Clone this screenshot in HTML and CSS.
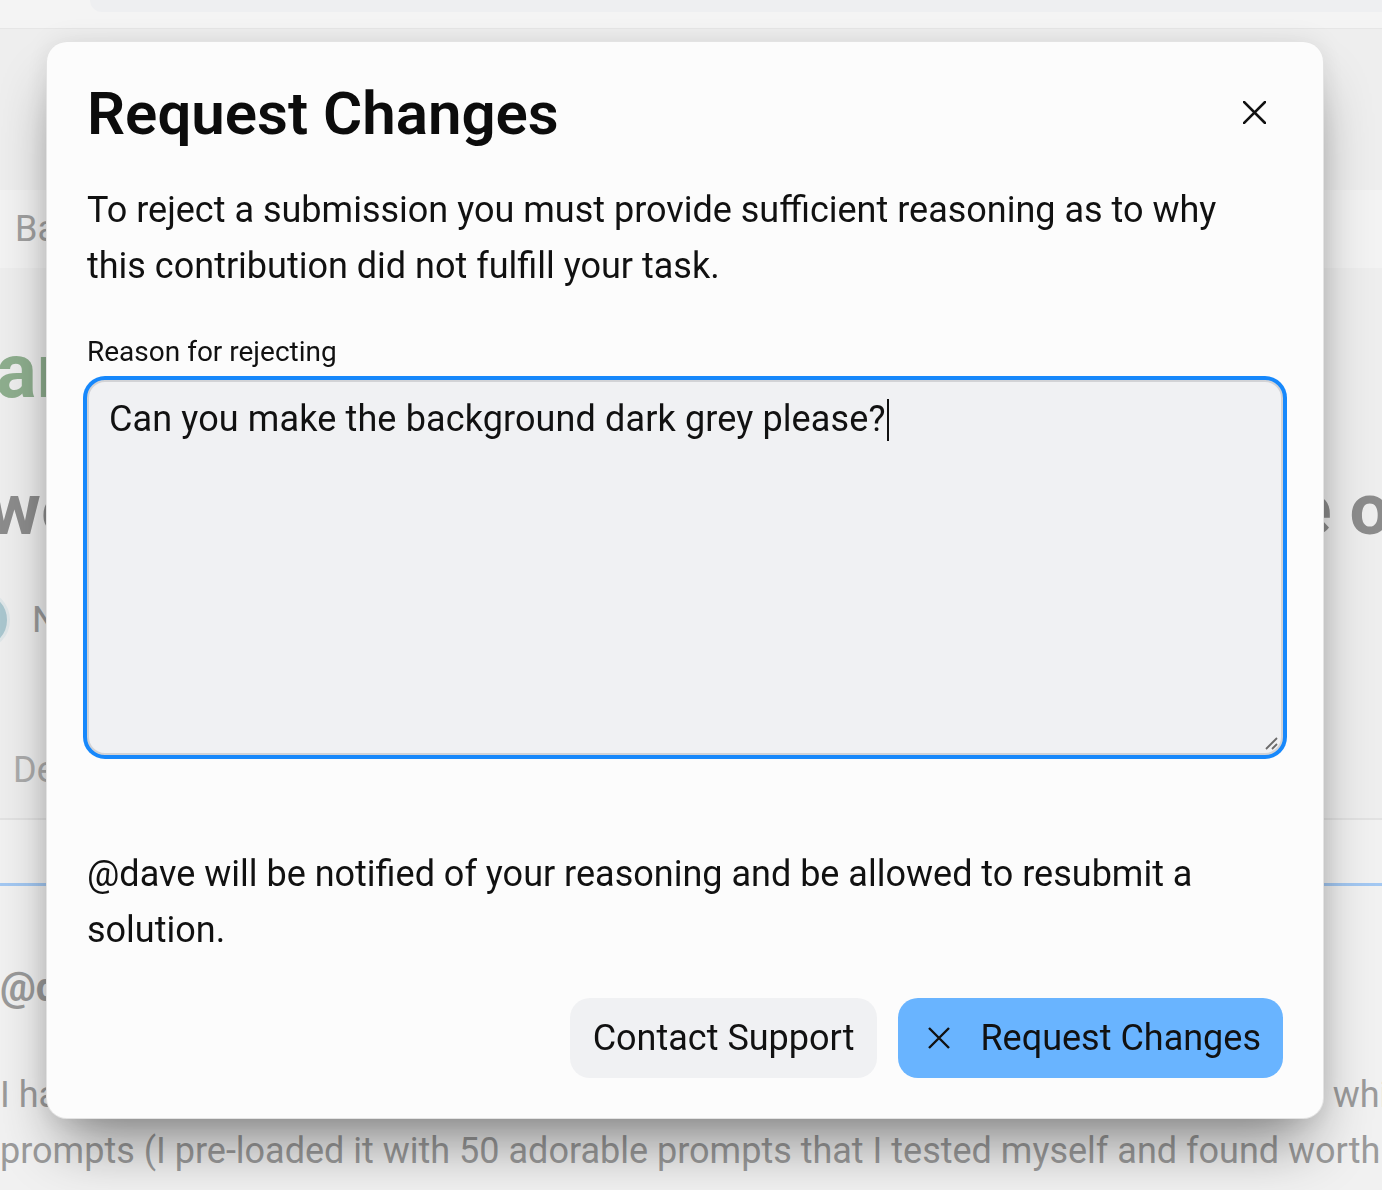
FILE: index.html
```html
<!DOCTYPE html>
<html lang="en">
<head>
<meta charset="utf-8">
<title>Request Changes</title>
<link rel="stylesheet" href="styles.css">
</head>
<body>
<div class="page">
  <header class="topbar"><div class="topbar-search"></div></header>
  <main class="main">
    <div class="crumbs">Back</div>
    <h1 class="hero">art</h1>
    <div class="subhead"><span>we</span><span class="subhead-right">one of</span></div>
    <div class="author"><span class="avatar"></span><span class="author-name">Nina</span></div>
    <div class="meta">Details</div>
  </main>
  <section class="lower">
    <div class="tabs"></div>
    <div class="handle">@dave</div>
    <div class="post-line"><span>I have</span><span class="post-right">which</span></div>
    <div class="post-line">prompts (I pre-loaded it with 50 adorable prompts that I tested myself and found worth sharing)</div>
  </section>
</div>

<div class="modal" role="dialog" aria-labelledby="modal-title">
  <div class="modal-header">
    <h2 class="modal-title" id="modal-title">Request Changes</h2>
    <button class="close-btn" aria-label="Close">
      <svg width="23" height="23" viewBox="0 0 23 23"><path d="M1 1L22 22M22 1L1 22" stroke="#111" stroke-width="2.6" stroke-linecap="square" fill="none"/></svg>
    </button>
  </div>
  <p class="modal-text">To reject a submission you must provide sufficient reasoning as to why this contribution did not fulfill your task.</p>
  <label class="field-label">Reason for rejecting</label>
  <div class="textarea">
    <span class="textarea-text">Can you make the background dark grey please?</span><span class="caret"></span>
    <svg class="resize" width="16" height="16" viewBox="0 0 16 16"><path d="M3 14L14 3M9 14L14 9" stroke="#6b6b6b" stroke-width="1.8" fill="none"/></svg>
  </div>
  <p class="modal-text footer-text">@dave will be notified of your reasoning and be allowed to resubmit a solution.</p>
  <div class="actions">
    <button class="btn btn-secondary">Contact Support</button>
    <button class="btn btn-primary">
      <svg width="24" height="24" viewBox="0 0 24 24"><path d="M2 2L22 22M22 2L2 22" stroke="#111" stroke-width="2.4" fill="none"/></svg>
      <span>Request Changes</span>
    </button>
  </div>
</div>
</body>
</html>
```

FILE: styles.css
```css
* { box-sizing: border-box; }

body {
  margin: 0;
  font-family: Roboto, "Liberation Sans", Arial, sans-serif;
  color: #111;
}

.page {
  width: 1382px;
  height: 1190px;
  overflow: hidden;
  background: #eeeeee;
}

/* background page */
.topbar {
  height: 29px;
  background: #f4f4f4;
  border-bottom: 1px solid #e6e6e6;
}
.topbar-search {
  margin-left: 90px;
  height: 12px;
  background: #eeeff1;
  border-bottom-left-radius: 12px;
}

.main {
  padding-bottom: 20px;
  border-bottom: 2px solid #e2e2e2;
}

.crumbs {
  margin-top: 161px;
  height: 78px;
  line-height: 78px;
  padding-left: 15px;
  background: #f3f3f3;
  font-size: 36px;
  color: #a0a0a0;
  white-space: nowrap;
}

.hero {
  margin: 55px 0 0 -4px;
  font-size: 76px;
  line-height: 96px;
  font-weight: 700;
  color: #8eae8e;
  white-space: nowrap;
}

.subhead {
  margin-top: 51px;
  height: 80px;
  display: flex;
  justify-content: space-between;
  font-size: 72px;
  line-height: 80px;
  font-weight: 700;
  color: #8c8c8c;
  white-space: nowrap;
  margin-left: -12px;
}
.subhead-right {
  margin-right: -34px;
}

.author {
  margin-top: 40px;
  height: 60px;
  display: flex;
  align-items: center;
  gap: 22px;
  margin-left: -50px;
}
.avatar {
  width: 60px;
  height: 60px;
  border-radius: 50%;
  background: #a9c6ce;
  border: 3px solid #dfe6e8;
}
.author-name {
  font-size: 36px;
  color: #9a9a9a;
}

.meta {
  margin-top: 92px;
  padding-left: 13px;
  font-size: 36px;
  line-height: 56px;
  color: #acacac;
}

.lower {
  background: #f1f1f1;
  height: 400px;
}
.tabs {
  height: 66px;
  border-bottom: 3px solid #a3c8f2;
}
.handle {
  margin-top: 74px;
  font-size: 40px;
  line-height: 56px;
  font-weight: 700;
  color: #9a9a9a;
  white-space: nowrap;
}
.post-line {
  font-size: 36px;
  line-height: 56px;
  color: #9b9b9b;
  white-space: nowrap;
  display: flex;
  justify-content: space-between;
}
.handle + .post-line {
  margin-top: 51px;
}
.post-right {
  margin-right: -45px;
}

/* modal */
.modal {
  position: fixed;
  left: 47px;
  top: 42px;
  width: 1276px;
  padding: 40px;
  background: #fcfcfc;
  border-radius: 20px;
  box-shadow: 0 0 0 1px #e3e3e3, 0 36px 60px -14px rgba(0, 0, 0, 0.45), 0 0 28px rgba(0, 0, 0, 0.09);
}

.modal-header {
  display: flex;
  justify-content: space-between;
  align-items: flex-start;
}
.modal-title {
  margin: 0;
  font-size: 60px;
  line-height: 64px;
  font-weight: 600;
  color: #0c0c0c;
}
.close-btn {
  width: 56px;
  height: 56px;
  margin-top: 2px;
  margin-right: 1px;
  padding: 0;
  border: 0;
  background: transparent;
  display: flex;
  align-items: center;
  justify-content: center;
}

.modal-text {
  margin: 36px 0 0;
  font-size: 36px;
  line-height: 56px;
  color: #111;
}

.field-label {
  display: block;
  margin-top: 38px;
  font-size: 28px;
  line-height: 40px;
  color: #111;
}

.textarea {
  position: relative;
  margin-top: 8px;
  height: 375px;
  padding: 9px 20px;
  background: #f0f1f3;
  border: 2px solid #d2d3d6;
  border-radius: 18px;
  box-shadow: 0 0 0 4px #1788fb;
  font-size: 36px;
  line-height: 56px;
  color: #111;
}
.textarea-text {
  letter-spacing: 0.12px;
}
.caret {
  display: inline-block;
  width: 2px;
  height: 42px;
  margin-left: 1px;
  background: #111;
  vertical-align: -10px;
}
.resize {
  position: absolute;
  right: 2px;
  bottom: 2px;
}

.footer-text {
  margin-top: 91px;
}

.actions {
  margin-top: 40px;
  display: flex;
  justify-content: flex-end;
  gap: 21px;
}
.btn {
  height: 80px;
  border: 0;
  border-radius: 20px;
  font-family: inherit;
  font-size: 36px;
  line-height: 56px;
  color: #111;
  display: flex;
  align-items: center;
}
.btn-secondary {
  padding: 0 23px;
  background: #f0f1f3;
}
.btn-primary {
  padding: 0 22px 0 29px;
  gap: 29px;
  background: #69b4ff;
}
```
